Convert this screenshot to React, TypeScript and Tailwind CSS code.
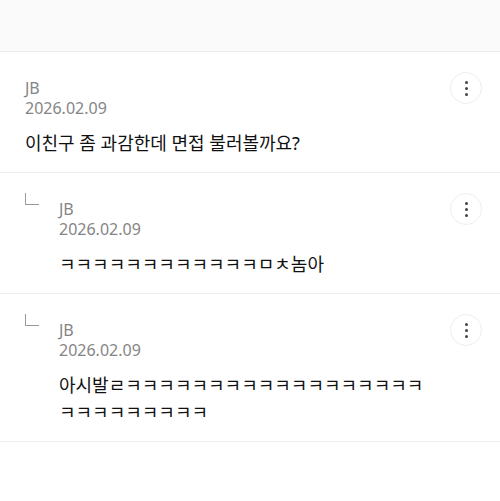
const comments = [
  {
    id: 1,
    author: "JB",
    date: "2026.02.09",
    body: "이친구 좀 과감한데 면접 불러볼까요?",
    reply: false,
  },
  {
    id: 2,
    author: "JB",
    date: "2026.02.09",
    body: "ㅋ".repeat(12) + "ㅁㅊ놈아",
    reply: true,
  },
  {
    id: 3,
    author: "JB",
    date: "2026.02.09",
    body: "아시발ㄹ" + "ㅋ".repeat(27),
    reply: true,
  },
];

function MoreButton() {
  return (
    <button
      className="w-8 h-8 shrink-0 rounded-full border border-[#eeeeee] bg-white flex flex-col items-center justify-center gap-[3px]"
      aria-label="더보기"
    >
      <span className="w-[3px] h-[3px] rounded-full bg-[#444]" />
      <span className="w-[3px] h-[3px] rounded-full bg-[#444]" />
      <span className="w-[3px] h-[3px] rounded-full bg-[#444]" />
    </button>
  );
}

export default function App() {
  return (
    <div className="w-[500px] h-[501px] bg-white overflow-hidden font-['Noto_Sans','Noto_Sans_CJK_KR',sans-serif]">
      <div className="h-[52px] bg-[#fafafa] border-b border-[#ececec]" />

      {comments.map((c) => (
        <div key={c.id} className="flex items-start pl-[25px] pr-[18px] pt-5 pb-[15px] border-b border-[#eeeeee]">
          {c.reply && (
            <div className="w-[14px] h-[12px] shrink-0 border-l border-b border-[#9a9a9a] mr-5" />
          )}
          <div className="flex-1 min-w-0 pt-1.5 pr-3">
            <p className="text-[16px] leading-[20px] text-[#858585]">{c.author}</p>
            <p className="text-[16px] leading-[20px] text-[#858585]">{c.date}</p>
            <p className="mt-3 text-[18px] leading-[27px] text-[#111] break-all">{c.body}</p>
          </div>
          <MoreButton />
        </div>
      ))}
    </div>
  );
}
